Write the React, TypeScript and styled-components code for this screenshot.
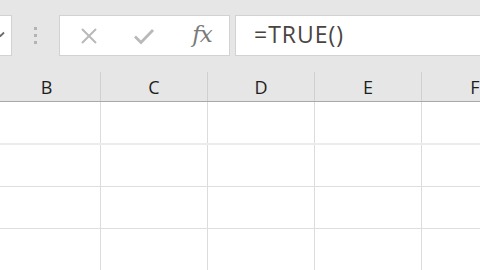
import React from "react";
import styled, { createGlobalStyle } from "styled-components";

const Global = createGlobalStyle`
  html, body { margin: 0; padding: 0; background: #ffffff; }
  body { font-family: "Open Sans", "Liberation Sans", sans-serif; }
`;

const Screen = styled.div`
  width: 480px;
  height: 270px;
  overflow: hidden;
  display: flex;
  flex-direction: column;
  background: #ffffff;
`;

const FormulaBar = styled.div`
  height: 72px;
  flex: none;
  background: #e6e6e6;
  display: flex;
  align-items: flex-start;
  padding-top: 15px;
  box-sizing: border-box;
`;

const Box = styled.div`
  height: 41px;
  box-sizing: border-box;
  background: #ffffff;
  border: 1px solid #d2d2d2;
  display: flex;
  align-items: center;
`;

const NameBox = styled(Box)`
  width: 12px;
  border-left: none;
  position: relative;
  overflow: hidden;
`;

const Grip = styled.div`
  width: 47px;
  height: 41px;
  display: flex;
  flex-direction: column;
  align-items: center;
  justify-content: center;
  gap: 4px;
`;

const Dot = styled.span`
  width: 3px;
  height: 3px;
  background: #b3b3b3;
`;

const Buttons = styled(Box)`
  width: 171px;
  flex: none;
  padding-left: 20px;
  gap: 0;
`;

const IconSlot = styled.div<{ $w: number }>`
  width: ${(p) => p.$w}px;
  flex: none;
  display: flex;
  align-items: center;
  justify-content: center;
`;

const Fx = styled.span`
  font-family: "DejaVu Serif", "Liberation Serif", serif;
  font-style: italic;
  font-size: 23px;
  color: #7a7a7a;
  letter-spacing: -1px;
  line-height: 1;
  margin-top: -2px;
`;

const Input = styled(Box)`
  margin-left: 5px;
  flex: 1;
  border-right: none;
  padding-left: 18px;
`;

const FormulaText = styled.span`
  font-family: "Open Sans", "Liberation Sans", sans-serif;
  font-size: 23px;
  color: #4a4440;
  letter-spacing: 1px;
  line-height: 1;
  margin-top: -2px;
`;

const HeaderRow = styled.div`
  height: 30px;
  flex: none;
  display: flex;
  background: #e6e6e6;
  border-bottom: 1px solid #a9a9a9;
  box-sizing: border-box;
`;

const HeaderCell = styled.div<{ $w: number }>`
  width: ${(p) => p.$w}px;
  flex: none;
  box-sizing: border-box;
  border-right: 1px solid #d0d0d0;
  display: flex;
  align-items: center;
  justify-content: center;
  font-family: "Open Sans", "Liberation Sans", sans-serif;
  font-size: 18px;
  color: #1e1e1e;
  padding-top: 1px;
`;

const HeaderStrip = styled.div`
  display: flex;
  margin-left: -7px;
`;

const Row = styled.div<{ $h: number; $thick?: boolean }>`
  height: ${(p) => p.$h}px;
  flex: none;
  display: flex;
  margin-left: -7px;
  box-sizing: border-box;
  border-bottom: ${(p) => (p.$thick ? "2px solid #ececec" : "1px solid #dedede")};
`;

const Cell = styled.div<{ $w: number }>`
  width: ${(p) => p.$w}px;
  flex: none;
  box-sizing: border-box;
  border-right: 1px solid #dcdcdc;
`;

const columns = ["B", "C", "D", "E", "F"];
const widths = [108, 107, 107, 107, 107];

export default function App() {
  return (
    <>
      <Global />
      <Screen>
        <FormulaBar>
          <NameBox>
            <svg width="12" height="41" viewBox="0 0 12 41" style={{ position: "absolute", left: 0, top: 0 }}>
              <path d="M-3 16.5 L0.5 20 L4 16.5" fill="none" stroke="#6a6a6a" strokeWidth="1.8" />
            </svg>
          </NameBox>
          <Grip>
            <Dot />
            <Dot />
            <Dot />
          </Grip>
          <Buttons>
            <IconSlot $w={18}>
              <svg width="18" height="18" viewBox="0 0 18 18">
                <path d="M2 2 L16 16 M16 2 L2 16" stroke="#b9b9b9" strokeWidth="2" fill="none" />
              </svg>
            </IconSlot>
            <IconSlot $w={35} />
            <IconSlot $w={22}>
              <svg width="22" height="18" viewBox="0 0 22 18">
                <path d="M2 9.5 L8 15.5 L20 3" stroke="#b9b9b9" strokeWidth="2.8" fill="none" />
              </svg>
            </IconSlot>
            <IconSlot $w={35} />
            <IconSlot $w={24}>
              <Fx>fx</Fx>
            </IconSlot>
          </Buttons>
          <Input>
            <FormulaText>=TRUE()</FormulaText>
          </Input>
        </FormulaBar>
        <HeaderRow>
          <HeaderStrip>
            {columns.map((c, i) => (
              <HeaderCell key={c} $w={widths[i]}>
                {c}
              </HeaderCell>
            ))}
          </HeaderStrip>
        </HeaderRow>
        {[
          { h: 43, thick: true },
          { h: 42 },
          { h: 42 },
          { h: 42 },
        ].map((r, ri) => (
          <Row key={ri} $h={r.h} $thick={r.thick}>
            {columns.map((c, i) => (
              <Cell key={c} $w={widths[i]} />
            ))}
          </Row>
        ))}
      </Screen>
    </>
  );
}
